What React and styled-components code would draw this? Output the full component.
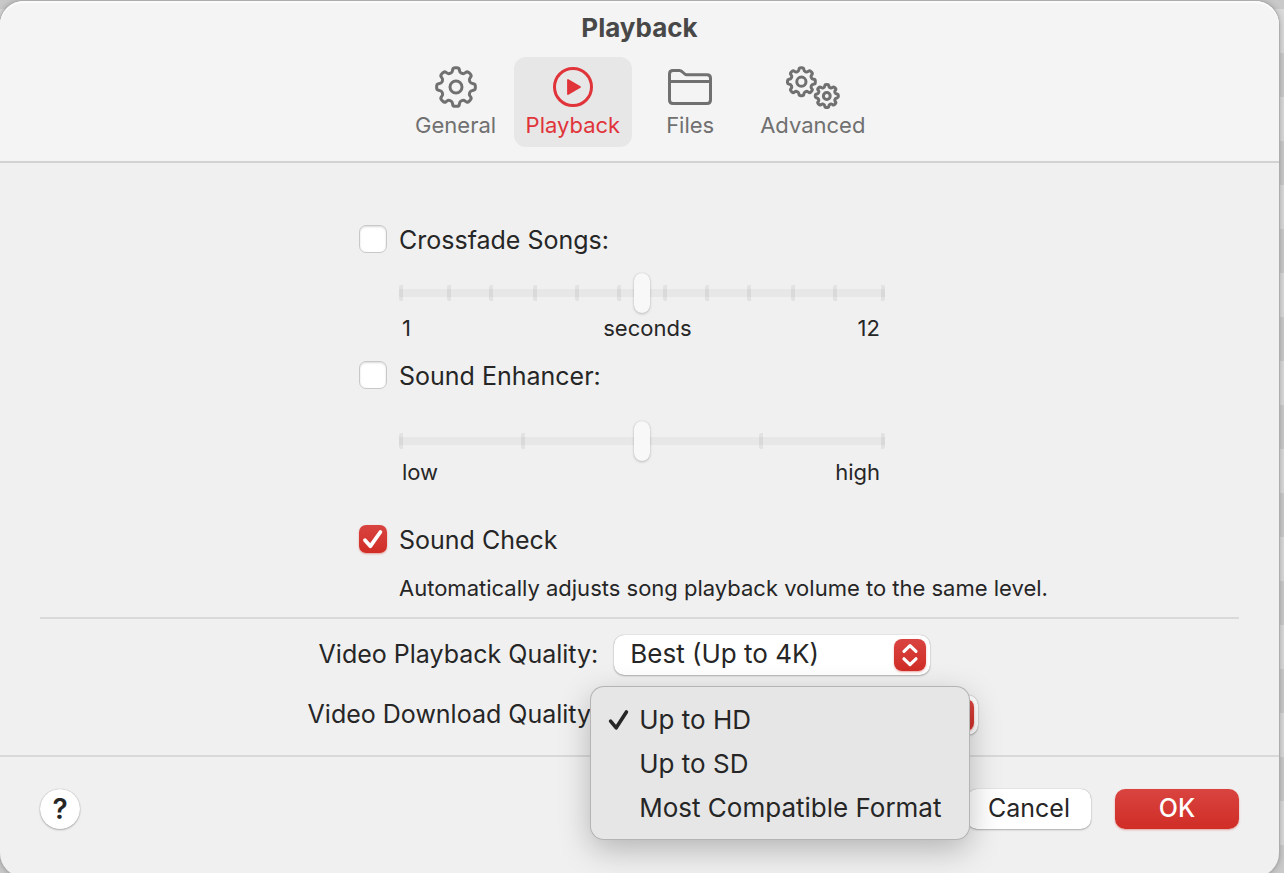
import React, { useState } from "react";
import styled, { createGlobalStyle, css } from "styled-components";

const tabs = [
  { name: "General", icon: GeneralIcon },
  { name: "Playback", icon: PlaybackIcon },
  { name: "Files", icon: FilesIcon },
  { name: "Advanced", icon: AdvancedIcon }
];

const qualities = ["Up to HD", "Up to SD", "Most Compatible Format"];

// distance between neighbouring tick marks
const crossfadeSteps = [48, 42, 44, 42, 42, 46, 42, 42, 44, 42, 48];
const enhancerSteps = [122, 118, 120, 122];

function gearPath(cx, cy, outer, inner, teeth) {
  const step = 360 / teeth;
  const corners = [];
  for (let i = 0; i < teeth; i++) {
    [
      [-0.32, inner],
      [-0.2, outer],
      [0.2, outer],
      [0.32, inner]
    ].forEach(([offset, r]) => {
      const a = ((i + offset) * step - 90) * (Math.PI / 180);
      corners.push([cx + r * Math.cos(a), cy + r * Math.sin(a)]);
    });
  }
  const mix = (a, b, t) => [a[0] + (b[0] - a[0]) * t, a[1] + (b[1] - a[1]) * t];
  const fmt = p => p.map(n => n.toFixed(2)).join(" ");
  return (
    corners
      .map((p, i) => {
        const prev = corners[(i + corners.length - 1) % corners.length];
        const next = corners[(i + 1) % corners.length];
        const from = fmt(mix(p, prev, 0.4));
        const to = fmt(mix(p, next, 0.4));
        return `${i ? "L" : "M"}${from} Q${fmt(p)} ${to}`;
      })
      .join(" ") + "Z"
  );
}

function GeneralIcon() {
  return (
    <Icon width="42" height="42" viewBox="0 0 42 42">
      <path d={gearPath(21, 21, 19.6, 15, 8)} />
      <circle cx="21" cy="21" r="6" />
    </Icon>
  );
}

function PlaybackIcon() {
  return (
    <Icon width="40" height="40" viewBox="0 0 40 40">
      <circle cx="20" cy="20" r="18.5" />
      <path d="M15 13v14l12-7z" fill="currentColor" strokeWidth="1.8" />
    </Icon>
  );
}

function FilesIcon() {
  return (
    <Icon width="44" height="36" viewBox="0 0 44 36">
      <path d="M1.5 31V5Q1.5 1.5 5 1.5h6.6c3.6 0 3.6 4.3 7.4 4.3H39q3.5 0 3.5 3.6V31q0 3.5-3.5 3.5H5q-3.5 0-3.5-3.5zM1.5 12.6h41" />
    </Icon>
  );
}

function AdvancedIcon() {
  return (
    <Icon width="54" height="43" viewBox="0 0 54 43">
      <path d={gearPath(15.4, 15.7, 14.1, 10.9, 8)} />
      <circle cx="15.4" cy="15.7" r="4.6" />
      <path d={gearPath(40.8, 30, 11.7, 9, 8)} />
      <circle cx="40.8" cy="30" r="3.4" />
    </Icon>
  );
}

function Checkbox({ id, label, defaultChecked }) {
  return (
    <CheckRow htmlFor={id}>
      <Box id={id} type="checkbox" defaultChecked={defaultChecked} />
      <Tick viewBox="0 0 28 28">
        <path d="M6 15.2l5.4 6L21.4 7" />
      </Tick>
      <span>{label}</span>
    </CheckRow>
  );
}

function Slider({ label, min, max, initial, steps, children }) {
  return (
    <SliderGroup>
      <Track>
        <Ticks $steps={steps}>
          {steps.map((step, i) => (
            <i key={i} />
          ))}
        </Ticks>
        <Range
          aria-label={label}
          type="range"
          min={min}
          max={max}
          step="0.5"
          defaultValue={initial}
        />
      </Track>
      {children}
    </SliderGroup>
  );
}

function PopUp({ id, width, value, onChange, options, children }) {
  return (
    <PopUpWrap $width={width}>
      <Select id={id} value={value} onChange={onChange}>
        {options.map(option => (
          <option key={option}>{option}</option>
        ))}
      </Select>
      <Cap viewBox="0 0 32 32">
        <path d="M10 12.4L16 6.6l6 5.8M10 19.8l6 5.8 6-5.8" />
      </Cap>
      {children}
    </PopUpWrap>
  );
}

function App() {
  const [tab, setTab] = useState("Playback");
  const [playback, setPlayback] = useState("Best (Up to 4K)");
  const [download, setDownload] = useState("Up to HD");

  return (
    <Window>
      <GlobalStyle />
      <Header>
        <Title>Playback</Title>
        <Toolbar>
          {tabs.map(({ name, icon: TabIcon }) => (
            <Tab key={name} $active={tab === name} onClick={() => setTab(name)}>
              <IconSlot>
                <TabIcon />
              </IconSlot>
              {name}
            </Tab>
          ))}
        </Toolbar>
      </Header>

      <main>
        <Settings>
          <Checkbox id="crossfade" label="Crossfade Songs:" />
          <Slider
            label="Crossfade seconds"
            min={1}
            max={12}
            initial={6.5}
            steps={crossfadeSteps}
          >
            <Scale $gap="4px">
              <span>1</span>
              <span>seconds</span>
              <span>12</span>
            </Scale>
          </Slider>
          <Spacer $size="22px" />
          <Checkbox id="enhancer" label="Sound Enhancer:" />
          <Spacer $size="12px" />
          <Slider
            label="Sound enhancer level"
            min={0}
            max={4}
            initial={2}
            steps={enhancerSteps}
          >
            <Scale>
              <span>low</span>
              <span />
              <span>high</span>
            </Scale>
          </Slider>
          <Spacer $size="42px" />
          <Checkbox id="check" label="Sound Check" defaultChecked />
          <Hint>
            Automatically adjusts song playback volume to the same level.
          </Hint>
        </Settings>

        <Divider />

        <Qualities>
          <label htmlFor="playback-quality">Video Playback Quality:</label>
          <PopUp
            id="playback-quality"
            width="316px"
            value={playback}
            onChange={e => setPlayback(e.target.value)}
            options={["Best (Up to 4K)", "Better", "Good"]}
          />
          <label htmlFor="download-quality">Video Download Quality:</label>
          <PopUp
            id="download-quality"
            width="364px"
            value={download}
            onChange={e => setDownload(e.target.value)}
            options={qualities}
          >
            <Menu>
              {qualities.map(quality => (
                <li key={quality}>
                  <MenuItem onClick={() => setDownload(quality)}>
                    <Mark viewBox="0 0 24 24" $shown={download === quality}>
                      <path d="M3.6 13.2l5.6 6.6L19.4 4" />
                    </Mark>
                    {quality}
                  </MenuItem>
                </li>
              ))}
            </Menu>
          </PopUp>
        </Qualities>
      </main>

      <Footer>
        <Help aria-label="Help">?</Help>
        <Button>Cancel</Button>
        <Button $primary>OK</Button>
      </Footer>
    </Window>
  );
}

const GlobalStyle = createGlobalStyle`
  * {
    box-sizing: border-box;
  }

  body {
    margin: 0;
    height: 100vh;
    overflow: hidden;
    background: repeating-linear-gradient(
      #d9d9d9 0 44px,
      #c9c9c9 44px 88px
    ) 0 9px;
    color: #262626;
    font-family: Inter, "Liberation Sans", sans-serif;
    font-size: 25px;
    line-height: 28px;
  }

  button,
  select {
    border: 0;
    color: inherit;
    font: inherit;
  }
`;

const redFill = css`
  background: linear-gradient(#d94440, #d02d26);
  box-shadow: 0 1px 2px rgba(208, 45, 38, 0.4);
`;

const whiteFill = css`
  background: #fff;
  box-shadow: 0 0 1px rgba(0, 0, 0, 0.35), 0 1px 2px rgba(0, 0, 0, 0.25);
`;

const Window = styled.div`
  margin: 1px 5px 0 0;
  border-radius: 24px;
  background: #f0f0f0;
  box-shadow: 0 0 0 1px #adadad, 0 0 6px rgba(0, 0, 0, 0.3);
`;

const Header = styled.header`
  padding: 12px 0 14px;
  border-bottom: 2px solid #d2d2d2;
  border-radius: 24px 24px 0 0;
  background: #f4f4f4;
  box-shadow: inset 0 2px 0 #fbfbfb;
`;

const Title = styled.h1`
  margin: 0 0 14px;
  color: #484848;
  font-size: 26px;
  font-weight: 700;
  line-height: 30px;
  text-align: center;
`;

const Toolbar = styled.nav`
  display: flex;
  justify-content: center;
  gap: 4px;
`;

const Tab = styled.button`
  min-width: 108px;
  height: 90px;
  padding: 8px 12px;
  border-radius: 12px;
  background: ${props => (props.$active ? "#e7e7e7" : "transparent")};
  color: ${props => (props.$active ? "#e0343a" : "#707070")};
  font-size: 22px;
  line-height: 28px;
`;

const IconSlot = styled.span`
  display: flex;
  align-items: center;
  justify-content: center;
  height: 44px;
  margin-bottom: 2px;
`;

const Icon = styled.svg`
  fill: none;
  stroke: currentColor;
  stroke-width: 3;
  stroke-linecap: round;
  stroke-linejoin: round;
`;

const Settings = styled.section`
  width: 561px;
  margin: 0 auto;
  padding-top: 62px;
`;

const Spacer = styled.div`
  height: ${props => props.$size};
`;

const CheckRow = styled.label`
  display: grid;
  grid-template-columns: 28px 1fr;
  column-gap: 12px;
  align-items: start;
  line-height: 30px;

  > span {
    grid-area: 1 / 2;
  }
`;

const Tick = styled.svg`
  grid-area: 1 / 1;
  visibility: hidden;
  fill: none;
  stroke: #fff;
  stroke-width: 3.8;
  stroke-linecap: round;
  stroke-linejoin: round;
`;

const Box = styled.input`
  grid-area: 1 / 1;
  appearance: none;
  width: 28px;
  height: 28px;
  margin: 0;
  border: 1px solid #c8c8c8;
  border-radius: 7px;
  background: #fff;
  box-shadow: inset 0 1px 2px rgba(0, 0, 0, 0.15);

  &:checked {
    border: 0;
    ${redFill}
  }

  &:checked + ${Tick} {
    visibility: visible;
  }
`;

const SliderGroup = styled.div`
  width: 486px;
  margin: 18px 0 0 40px;
`;

const Track = styled.div`
  display: grid;
  align-items: center;
`;

const Ticks = styled.div`
  display: grid;
  grid-area: 1 / 1;
  grid-template-columns: ${props => props.$steps.map(s => `${s}fr`).join(" ")};
  height: 16px;
  border-right: 4px solid #e2e2e2;
  border-radius: 2px;

  i {
    border-left: 4px solid #e2e2e2;
    border-radius: 2px 0 0 2px;
  }
`;

const Range = styled.input`
  grid-area: 1 / 1;
  appearance: none;
  width: 100%;
  height: 40px;
  margin: 0;
  background: linear-gradient(rgba(0, 0, 0, 0.04), rgba(0, 0, 0, 0.04)) center /
    100% 8px no-repeat;

  &::-webkit-slider-thumb {
    appearance: none;
    width: 16px;
    height: 40px;
    border-radius: 8px;
    background: #f8f8f8;
    box-shadow: 0 0 1px rgba(0, 0, 0, 0.2), 0 1px 3px rgba(0, 0, 0, 0.2);
  }
`;

const Scale = styled.div`
  display: grid;
  grid-template-columns: 8fr 5fr 6fr;
  margin-top: ${props => props.$gap || 0};
  padding: 0 5px 0 3px;
  font-size: 22px;
  line-height: 22px;

  span:last-child {
    text-align: right;
  }
`;

const Hint = styled.p`
  margin: 22px 0 18px 40px;
  font-size: 22px;
  line-height: 22px;
  white-space: nowrap;
`;

const Divider = styled.hr`
  height: 2px;
  margin: 0 40px;
  border: 0;
  background: #d9d9d9;
`;

const Qualities = styled.section`
  display: grid;
  grid-template-columns: 9fr 10fr;
  gap: 20px 16px;
  align-items: center;
  padding: 16px 0 20px;

  > label {
    padding-bottom: 2px;
    text-align: right;
  }
`;

const PopUpWrap = styled.div`
  position: relative;
  width: ${props => props.$width};
`;

const Select = styled.select`
  appearance: none;
  display: block;
  width: 100%;
  height: 40px;
  padding: 0 48px 2px 16px;
  border-radius: 10px;
  font-size: 26px;
  ${whiteFill}
`;

const Cap = styled.svg`
  position: absolute;
  top: 4px;
  right: 4px;
  width: 32px;
  height: 32px;
  border-radius: 8px;
  fill: none;
  stroke: #fff;
  stroke-width: 3.2;
  stroke-linecap: round;
  stroke-linejoin: round;
  pointer-events: none;
  ${redFill}
`;

const Menu = styled.ul`
  position: absolute;
  top: -8px;
  left: -23px;
  z-index: 1;
  width: 378px;
  margin: 0;
  padding: 11px 0 9px;
  border-radius: 13px;
  background: #e6e6e6;
  box-shadow: 0 0 0 1px #b4b4b4, 0 10px 32px rgba(0, 0, 0, 0.26);
  list-style: none;
`;

const MenuItem = styled.button`
  display: flex;
  align-items: center;
  gap: 8px;
  width: 100%;
  height: 44px;
  padding: 0 16px;
  background: none;
  font-size: 26px;
  white-space: nowrap;
`;

const Mark = styled.svg`
  flex: none;
  width: 24px;
  height: 24px;
  visibility: ${props => (props.$shown ? "visible" : "hidden")};
  fill: none;
  stroke: currentColor;
  stroke-width: 3.6;
  stroke-linecap: round;
  stroke-linejoin: round;
`;

const Footer = styled.footer`
  display: flex;
  gap: 24px;
  padding: 32px 40px 48px;
  border-top: 2px solid #d9d9d9;
`;

const Button = styled.button`
  width: 124px;
  height: 40px;
  padding: 0 0 2px;
  border-radius: 10px;
  ${whiteFill}
  ${props =>
    props.$primary &&
    css`
      ${redFill}
      color: #fff;
      font-weight: 500;
    `}
`;

const Help = styled.button`
  width: 40px;
  height: 40px;
  margin-right: auto;
  padding: 0;
  border-radius: 50%;
  font-size: 28px;
  font-weight: 600;
  ${whiteFill}
`;

export default App;
